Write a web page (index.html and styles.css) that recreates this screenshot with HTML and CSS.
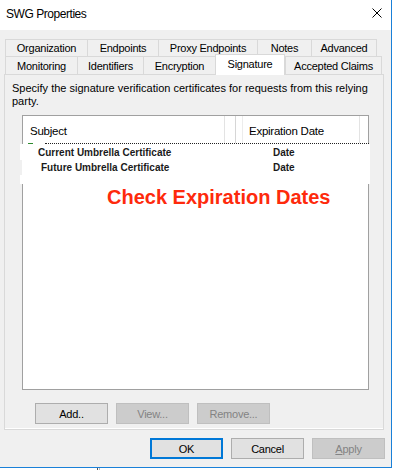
FILE: index.html
```html
<!DOCTYPE html>
<html>
<head>
<meta charset="utf-8">
<title>SWG Properties</title>
<link rel="stylesheet" href="styles.css">
</head>
<body>
<div class="window">
  <div class="titlebar">
    <span class="title">SWG Properties</span>
    <svg class="close" width="10" height="10" viewBox="0 0 10 10"><path d="M0.5 0.5 L9.5 9.5 M9.5 0.5 L0.5 9.5" stroke="#000" stroke-width="1" fill="none"/></svg>
  </div>
  <div class="client">
    <div class="tabs">
      <div class="tabrow row1">
        <div class="tab">Organization</div>
        <div class="tab">Endpoints</div>
        <div class="tab">Proxy Endpoints</div>
        <div class="tab">Notes</div>
        <div class="tab last">Advanced</div>
      </div>
      <div class="tabrow row2">
        <div class="tab">Monitoring</div>
        <div class="tab">Identifiers</div>
        <div class="tab">Encryption</div>
        <div class="tab selected">Signature</div>
        <div class="tab last">Accepted Claims</div>
      </div>
    </div>
    <div class="panel">
      <p class="desc">Specify the signature verification certificates for requests from this relying party.</p>
      <div class="list">
        <div class="lv-header">
          <div class="hcell subject">Subject</div>
          <div class="hcell gap1"></div>
          <div class="hcell gap2"></div>
          <div class="hcell expires">Expiration Date</div>
        </div>
        <div class="focusline"><span class="mark"></span><span class="dots"></span></div>
        <div class="rows">
          <div class="row"><span class="name">Current Umbrella Certificate</span><span class="date">Date</span></div>
          <div class="row future"><span class="name">Future Umbrella Certificate</span><span class="date">Date</span></div>
          <div class="row blank"></div>
        </div>
        <div class="callout">Check Expiration Dates</div>
      </div>
      <div class="btnrow">
        <div class="btn">Add..</div>
        <div class="btn disabled">View...</div>
        <div class="btn disabled">Remove...</div>
      </div>
    </div>
    <div class="dlgbtns">
      <div class="btn default">OK</div>
      <div class="btn">Cancel</div>
      <div class="btn disabled"><u>A</u>pply</div>
    </div>
  </div>
</div>
<div class="below"><span class="tick"></span></div>
</body>
</html>
```

FILE: styles.css
```css
* { box-sizing: border-box; }
html, body { margin: 0; padding: 0; background: #fff; }
body {
  width: 394px;
  height: 470px;
  overflow: hidden;
  font-family: "Liberation Sans", Arial, sans-serif;
  font-size: 11px;
  letter-spacing: -0.25px;
  color: #000;
}
.window {
  width: 392px;
  height: 468px;
  border-right: 1px solid #1a80d8;
  border-bottom: 1px solid #1a80d8;
  display: flex;
  flex-direction: column;
}
.titlebar {
  height: 30px;
  background: #fff;
  display: flex;
  align-items: center;
  justify-content: space-between;
  padding-left: 6px;
  padding-right: 9px;
}
.title {
  font-size: 12px;
  letter-spacing: -0.45px;
  margin-top: -2px;
}
.close { display: block; margin-top: -4px; }
.client {
  flex: 1;
  background: #f0f0f0;
  padding-top: 9px;
  display: flex;
  flex-direction: column;
}
.tabs { margin-left: 5px; }
.tabrow { display: grid; }
.row1 { grid-template-columns: 82px 71px 99px 54px 66px; height: 17px; }
.row2 { grid-template-columns: 72px 66px 72px 70px 97px; height: 18px; }
.tab {
  border-left: 1px solid #d9d9d9;
  border-top: 1px solid #d9d9d9;
  background: #f0f0f0;
  display: flex;
  align-items: center;
  justify-content: center;
  white-space: nowrap;
}
.tab.last { border-right: 1px solid #d9d9d9; }
.row2 .tab { padding-top: 1px; }
.tab.selected {
  background: #fff;
  border-right: 1px solid #d9d9d9;
  margin-top: -2px;
  margin-bottom: -1px;
  padding-top: 0;
  padding-bottom: 3px;
  position: relative;
  z-index: 2;
}
.panel {
  margin-left: 4px;
  width: 380px;
  height: 356px;
  border: 1px solid #d9d9d9;
  box-shadow: inset 0 -1px 0 #fff;
  padding: 7px 0 5px 7px;
}
.desc {
  margin: 0;
  line-height: 13px;
  width: 368px;
  letter-spacing: 0;
}
.list {
  margin-top: 7px;
  margin-left: 10px;
  width: 347px;
  height: 275px;
  border: 1px solid #a0a0a0;
  background: #fff;
}
.lv-header {
  display: flex;
  height: 27px;
  font-size: 11.5px;
}
.hcell {
  height: 27px;
  border-right: 1px solid #e3e3e3;
  display: flex;
  align-items: center;
  padding-top: 2px;
}
.hcell.subject { width: 202px; padding-left: 7px; }
.hcell.gap1 { width: 11px; border-right-color: #d6d6d6; }
.hcell.gap2 { width: 7px; border-right-color: #ececec; }
.hcell.expires { width: 117px; padding-left: 6px; }
.focusline {
  display: flex;
  align-items: flex-start;
  height: 1px;
}
.mark {
  display: block;
  margin-left: 5px;
  width: 5px;
  height: 1px;
  background: #2e8b2e;
}
.dots {
  display: block;
  margin-left: 12px;
  flex: 1;
  margin-right: -1px;
  border-top: 1px dotted #222;
}
.rows {
  margin-left: -3px;
  margin-right: -2px;
  position: relative;
  z-index: 1;
}
.row {
  background: #fff;
  height: 15px;
  display: flex;
  align-items: center;
  font-size: 10px;
  font-weight: bold;
  letter-spacing: 0;
  color: #1a1a1a;
  padding-left: 18px;
}
.row .name { width: 235px; }
.row.future { padding-left: 19px; margin-left: 2px; }
.row.future .name { width: 232px; }
.row.blank { height: 9px; }
.row:first-child { height: 16px; }
.callout {
  margin-top: 1px;
  padding-left: 84px;
  font-size: 20px;
  line-height: 24px;
  font-weight: bold;
  letter-spacing: 0;
  color: #fe2a0c;
}
.btnrow {
  margin-top: 13px;
  margin-left: 23px;
  display: flex;
  gap: 8px;
}
.btn {
  width: 73px;
  height: 21px;
  border: 1px solid #adadad;
  background: #e1e1e1;
  display: flex;
  align-items: center;
  justify-content: center;
}
.btn.disabled {
  background: #cccccc;
  border-color: #bfbfbf;
  color: #838383;
}
.btn.default { border: 2px solid #0078d7; }
.dlgbtns {
  margin-top: 8px;
  display: flex;
  justify-content: flex-end;
  gap: 8px;
  padding-right: 6px;
}
.below {
  height: 2px;
  display: flex;
}
.tick {
  display: block;
  margin-left: 97px;
  width: 3px;
  height: 2px;
  border-left: 1px solid #555;
  border-right: 1px solid #bbb;
}
```
